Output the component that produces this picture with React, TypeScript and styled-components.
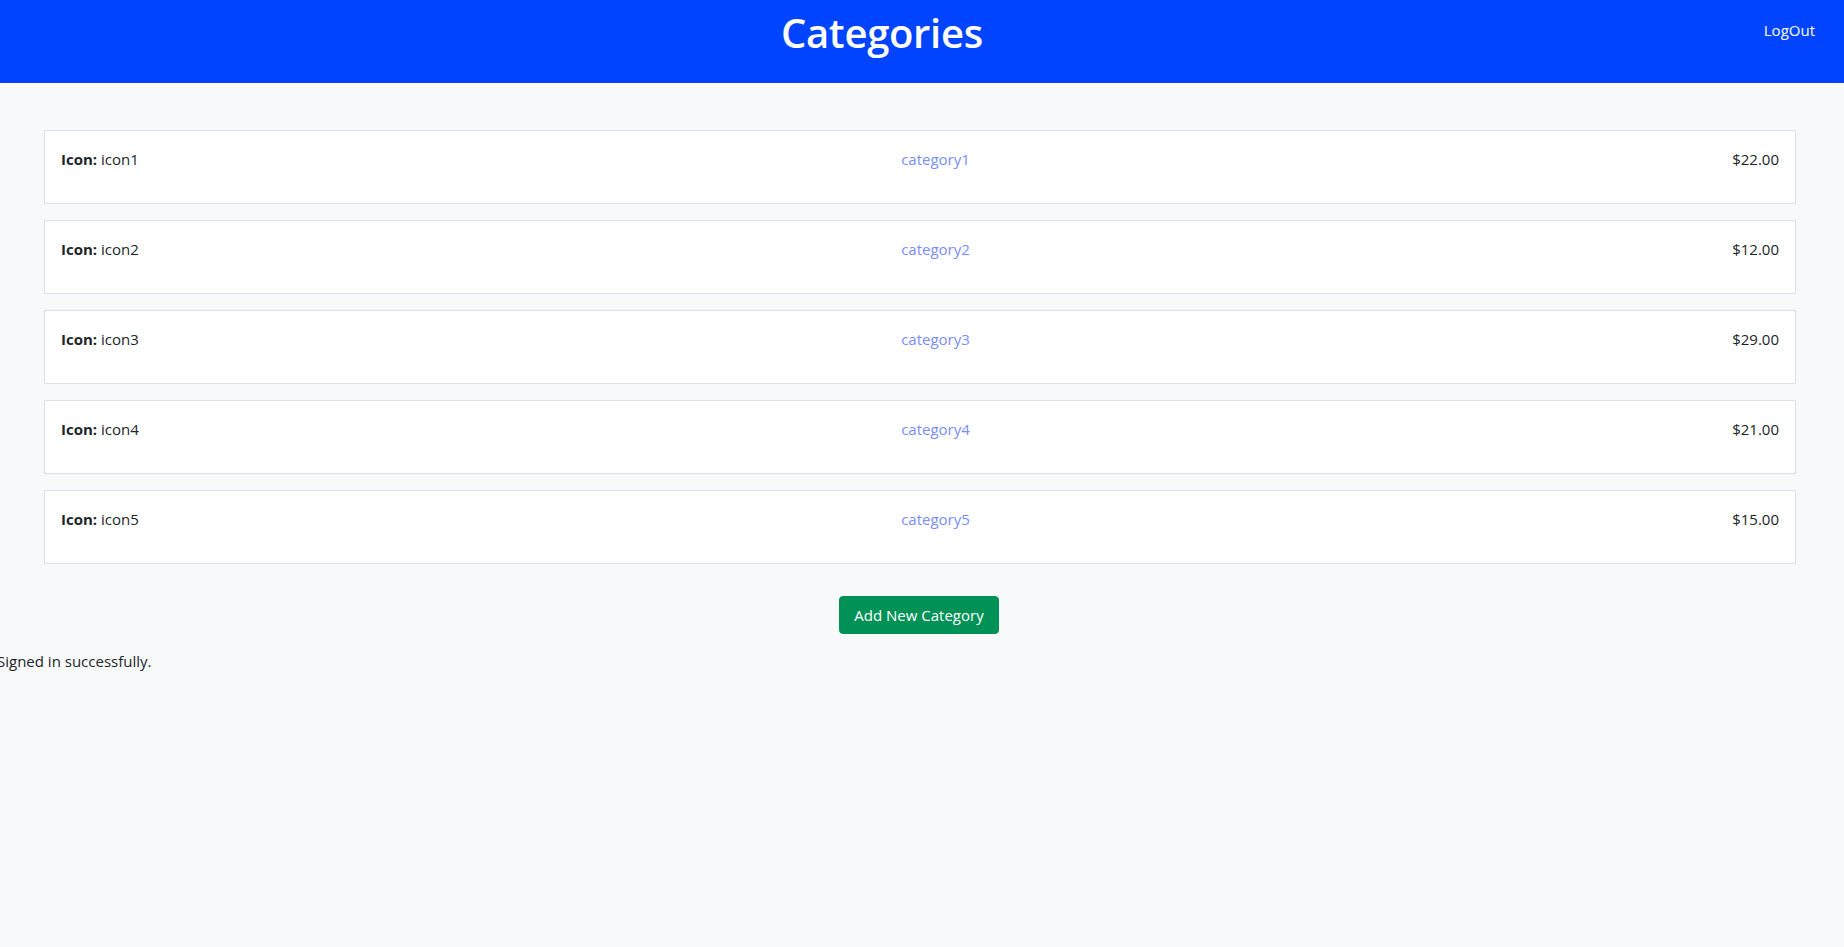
import React from "react";
import styled, { createGlobalStyle } from "styled-components";

const GlobalStyle = createGlobalStyle`
  html, body {
    margin: 0;
    padding: 0;
    background: #f8f9fa;
    font-family: "Open Sans", "Noto Sans", "Liberation Sans", sans-serif;
    font-size: 16px;
    line-height: 1.5;
    color: #212529;
    overflow: hidden;
  }
  * { box-sizing: border-box; }
`;

const Page = styled.div`
  min-height: 947px;
  background: #f8f9fa;
`;

const Header = styled.header`
  display: flex;
  align-items: flex-start;
  height: 83px;
  background: #0044ff;
  padding-right: 29px;
`;

const Title = styled.h1`
  flex: 1;
  margin: 0;
  padding-top: 9px;
  text-align: center;
  font-size: 40px;
  font-weight: 600;
  line-height: 48px;
  letter-spacing: -0.3px;
  color: #ffffff;
`;

const LogOut = styled.a`
  margin-top: 18px;
  font-size: 15px;
  line-height: 24px;
  color: #ffffff;
  text-decoration: none;
  cursor: pointer;
`;

const Main = styled.main`
  padding: 47px 48px 0 44px;
`;

const List = styled.div`
  display: flex;
  flex-direction: column;
  gap: 16px;
`;

const Card = styled.div`
  display: flex;
  justify-content: space-between;
  align-items: flex-start;
  background: #ffffff;
  border: 1px solid #dee2e6;
  padding: 16px 16px 32px;
  height: 74px;
  font-size: 15px;
  line-height: 24px;
`;

const Label = styled.strong`
  font-weight: 700;
`;

const CategoryLink = styled.a`
  color: #7a8dff;
  text-decoration: none;
  cursor: pointer;
`;

const Price = styled.span`
  font-weight: 500;
`;

const Actions = styled.div`
  display: flex;
  justify-content: center;
  margin-top: 32px;
  padding-right: 2px;
`;

const AddButton = styled.button`
  height: 38px;
  padding: 6px 14px;
  border: 1px solid #009157;
  border-radius: 4px;
  background: #009157;
  color: #ffffff;
  font-family: inherit;
  font-size: 15px;
  line-height: 24px;
  cursor: pointer;
`;

const Notice = styled.p`
  margin: 15px 0 0 -3px;
  font-size: 15px;
  line-height: 24px;
`;

type Category = { icon: string; name: string; price: string };

const categories: Category[] = [
  { icon: "icon1", name: "category1", price: "$22.00" },
  { icon: "icon2", name: "category2", price: "$12.00" },
  { icon: "icon3", name: "category3", price: "$29.00" },
  { icon: "icon4", name: "category4", price: "$21.00" },
  { icon: "icon5", name: "category5", price: "$15.00" },
];

export default function App() {
  return (
    <Page>
      <GlobalStyle />
      <Header>
        <Title>Categories</Title>
        <LogOut>LogOut</LogOut>
      </Header>
      <Main>
        <List>
          {categories.map((c) => (
            <Card key={c.name}>
              <span>
                <Label>Icon:</Label> {c.icon}
              </span>
              <CategoryLink>{c.name}</CategoryLink>
              <Price>{c.price}</Price>
            </Card>
          ))}
        </List>
        <Actions>
          <AddButton>Add New Category</AddButton>
        </Actions>
      </Main>
      <Notice>Signed in successfully.</Notice>
    </Page>
  );
}
